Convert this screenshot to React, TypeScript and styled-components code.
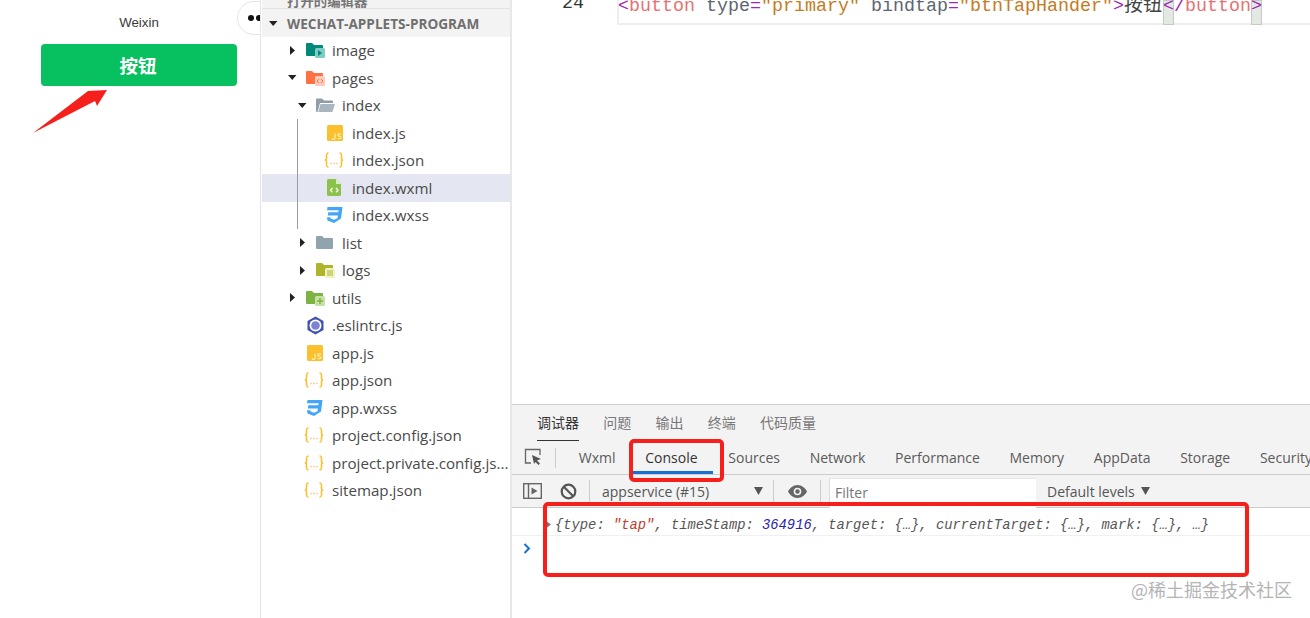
import React from "react";
import styled, { createGlobalStyle } from "styled-components";

const Global = createGlobalStyle`
  html, body { margin: 0; padding: 0; background: #fff; }
  * { box-sizing: border-box; }
`;

const UI = `"Open Sans", "Noto Sans", "Noto Sans CJK SC", sans-serif`;

const Page = styled.div`
  position: relative;
  width: 1310px;
  height: 618px;
  overflow: hidden;
  display: grid;
  grid-template-columns: 261px 251px 798px;
  font-family: ${UI};
`;

/* Simulator */
const Simulator = styled.section`
  position: relative;
  overflow: hidden;
  height: 618px;
  border-right: 1px solid #e3e3e3;
  display: flex;
  flex-direction: column;
  align-items: flex-start;
  padding: 15px 0 0 41px;
`;
const Title = styled.div`
  width: 196px;
  height: 29px;
  text-align: center;
  font: 13.3px/16px "Liberation Sans", sans-serif;
  color: #3a3a3a;
`;
const PrimaryButton = styled.button`
  width: 196px;
  height: 42px;
  border: 0;
  border-radius: 4px;
  background: #07c160;
  color: #fff;
  font: 700 18.5px/42px "Noto Sans CJK SC", sans-serif;
  padding: 0 2px 0 0;
`;
const Capsule = styled.div`
  position: absolute;
  left: 237px;
  top: 1px;
  width: 60px;
  height: 34px;
  border: 1px solid #e5e5e5;
  border-radius: 17px;
  background: #fff;
  display: flex;
  align-items: center;
  gap: 2px;
  padding-left: 10px;
`;
const Dot = styled.i`
  width: 6px;
  height: 6px;
  border-radius: 50%;
  background: #111;
`;

/* Tree */
const Tree = styled.aside`
  height: 618px;
  overflow: hidden;
  border-right: 2px solid #e8e8e8;
  padding-left: 1px;
`;
const Clipped = styled.div`
  height: 9px;
  background: #f3f3f3;
  border-bottom: 1px solid #e2e2e2;
  color: #777;
  font: 700 13.4px/0px "Noto Sans CJK SC", sans-serif;
  padding-left: 25px;
  overflow: hidden;
`;
const Header = styled.div`
  height: 27.5px;
  padding-top: 1px;
  background: #f3f3f3;
  display: flex;
  align-items: center;
  padding-left: 7px;
  gap: 9px;
  font-weight: 700;
  font-size: 13.6px;
  color: #6f6f6f;
  white-space: nowrap;
`;
const GroupWrap = styled.div`
  position: relative;
`;
const Guide = styled.div`
  position: absolute;
  left: 35px;
  top: 0;
  width: 1px;
  height: 110px;
  background: #9c9c9c;
`;
const Row = styled.div<{ $level: number; $selected?: boolean }>`
  height: 27.5px;
  display: flex;
  align-items: center;
  padding-left: ${(p) => 27 + p.$level * 10}px;
  background: ${(p) => (p.$selected ? "#e4e6f1" : "transparent")};
  font-size: 15.15px;
  color: #4a4a4a;
  white-space: nowrap;
`;
const ArrowSlot = styled.span`
  width: 18px;
  flex: none;
  display: flex;
  align-items: center;
  margin-left: -1px;
`;
const IconSlot = styled.span`
  width: 26px;
  flex: none;
  display: flex;
  align-items: center;
`;
const Name = styled.span`
  display: block;
  overflow: hidden;
`;

const Caret = ({ open }: { open?: boolean }) => (
  <svg width="9" height="9" viewBox="0 0 9 9">
    <path d={open ? "M0 2h8.5L4.2 7z" : "M2 0v9l5-4.5z"} fill="#222" />
  </svg>
);

const Folder = ({ color, light, kind }: { color: string; light?: string; kind?: string }) => (
  <svg width="19" height="16" viewBox="0 0 19 16">
    <path d="M0 2a1 1 0 0 1 1-1h5l2 2h8a1 1 0 0 1 1 1v9a1 1 0 0 1-1 1H1a1 1 0 0 1-1-1z" fill={color} />
    {kind && <rect x="9" y="6" width="10" height="10" rx="1.5" fill={light} />}
    {kind === "img" && <path d="M12 8l4 3-4 3z" fill={color} />}
    {kind === "code" && <path d="M13 9l-2 2 2 2M15 9l2 2-2 2" stroke={color} strokeWidth="1" fill="none" />}
    {kind === "log" && <path d="M11 9h6M11 11h6M11 13h6" stroke={color} strokeWidth="1" />}
    {kind === "plus" && <path d="M14 8v6M11 11h6" stroke={color} strokeWidth="1.4" />}
  </svg>
);
const OpenFolder = () => (
  <svg width="19" height="15" viewBox="0 0 19 15">
    <path d="M0 1.5a1 1 0 0 1 1-1h5l2 2h8a1 1 0 0 1 1 1V5H4L1.5 14H1a1 1 0 0 1-1-1z" fill="#8f9ea8" />
    <path d="M4.5 6H19l-2.6 8H2.2z" fill="#aab6be" />
  </svg>
);
const JsIcon = () => (
  <svg width="16" height="16" viewBox="0 0 16 16" style={{ marginLeft: 1 }}>
    <rect width="16" height="16" rx="1.5" fill="#fbc02d" />
    <path d="M8 8.500v4.500a1.500 1.500 0 0 1-3 0M14 9.300c-.6-.8-3.200-.9-3.200.6 0 1.500 3.300 1 3.300 2.700 0 1.500-2.800 1.400-3.500.4" fill="none" stroke="#fff3c4" strokeWidth="1.100" />
  </svg>
);
const JsonIcon = () => (
  <svg width="20" height="16" viewBox="0 0 20 16" style={{ marginLeft: -2 }}>
    <path d="M4.500 1C2.500 1 2.500 2 2.500 4v2.500C2.500 7.500 1.500 8 .8 8c.7 0 1.700.5 1.700 1.500V12c0 2 0 3 2 3M15.500 1c2 0 2 1 2 3v2.500c0 1 1 1.500 1.700 1.500-.7 0-1.700.5-1.700 1.500V12c0 2 0 3-2 3" fill="none" stroke="#fbc02d" strokeWidth="1.600" />
    <path d="M6.500 11.500h1M9.500 11.500h1M12.500 11.500h1" stroke="#f5a742" strokeWidth="1.400" />
  </svg>
);
const WxmlIcon = () => (
  <svg width="15" height="17" viewBox="0 0 15 17" style={{ marginLeft: 1 }}>
    <path d="M1.500 0H9l5 5v10.500a1.500 1.500 0 0 1-1.500 1.500h-11A1.500 1.500 0 0 1 0 15.500v-14A1.500 1.500 0 0 1 1.500 0z" fill="#8bc34a" />
    <path d="M9 0l5 5H9z" fill="#dcedc8" />
    <path d="M5.500 9l-2 2.200 2 2.200M9 9l2 2.200-2 2.200" fill="none" stroke="#fff" strokeWidth="1.200" />
  </svg>
);
const CssIcon = () => (
  <svg width="17" height="16" viewBox="0 0 17 16">
    <path d="M1.500 0H16.500L15 11.500 8 16 1.500 13.500 1 10.200h3.300l.3 1.300L8 12.800l3.500-1.500.4-2.800H1.800L2.300 5.300h10l.3-2H1z" fill="#42a5f5" />
  </svg>
);
const EslintIcon = () => (
  <svg width="19" height="19" viewBox="0 0 19 19">
    <path d="M9.500 .5l8 4.500v9l-8 4.500-8-4.500V5z" fill="#3f51b5" />
    <circle cx="9.500" cy="9.500" r="6" fill="#fff" />
    <circle cx="9.500" cy="9.500" r="4.300" fill="#7c83d4" />
  </svg>
);

type Node = { name: string; level: number; caret?: "open" | "closed"; icon: React.ReactNode; selected?: boolean };

const topNodes: Node[] = [
  { name: "image", level: 0, caret: "closed", icon: <Folder color="#00897b" light="#80cbc4" kind="img" /> },
  { name: "pages", level: 0, caret: "open", icon: <Folder color="#ff7043" light="#ffccbc" kind="code" /> },
  { name: "index", level: 1, caret: "open", icon: <OpenFolder /> },
];
const indexNodes: Node[] = [
  { name: "index.js", level: 2, icon: <JsIcon /> },
  { name: "index.json", level: 2, icon: <JsonIcon /> },
  { name: "index.wxml", level: 2, icon: <WxmlIcon />, selected: true },
  { name: "index.wxss", level: 2, icon: <CssIcon /> },
];
const restNodes: Node[] = [
  { name: "list", level: 1, caret: "closed", icon: <Folder color="#90a4ae" /> },
  { name: "logs", level: 1, caret: "closed", icon: <Folder color="#afb42b" light="#f0f4c3" kind="log" /> },
  { name: "utils", level: 0, caret: "closed", icon: <Folder color="#7cb342" light="#c5e1a5" kind="plus" /> },
  { name: ".eslintrc.js", level: 0, icon: <EslintIcon /> },
  { name: "app.js", level: 0, icon: <JsIcon /> },
  { name: "app.json", level: 0, icon: <JsonIcon /> },
  { name: "app.wxss", level: 0, icon: <CssIcon /> },
  { name: "project.config.json", level: 0, icon: <JsonIcon /> },
  { name: "project.private.config.js...", level: 0, icon: <JsonIcon /> },
  { name: "sitemap.json", level: 0, icon: <JsonIcon /> },
];

const TreeRow = ({ n }: { n: Node }) => (
  <Row $level={n.level} $selected={n.selected}>
    <ArrowSlot>{n.caret && <Caret open={n.caret === "open"} />}</ArrowSlot>
    <IconSlot>{n.icon}</IconSlot>
    <Name>{n.name}</Name>
  </Row>
);

/* Right side */
const Main = styled.main`
  height: 618px;
  display: grid;
  grid-template-rows: 404px 214px;
`;
const Editor = styled.div`
  overflow: hidden;
  display: flex;
  align-items: flex-start;
  padding-left: 50px;
`;
const LineNo = styled.div`
  width: 55px;
  font: 18.3px/6px "Liberation Mono", monospace;
  color: #333;
`;
const CodeLine = styled.div`
  position: relative;
  isolation: isolate;
  flex: 1;
  height: 25px;
  border: 2px solid #eeeeee;
  border-top: 0;
  border-right: 0;
  font: 18.33px/6px "Liberation Mono", "Noto Sans CJK SC", monospace;
  white-space: nowrap;
  color: #5c6670;
  text-indent: -1px;
`;
const Tok = styled.span<{ $c: string }>`
  color: ${(p) => p.$c};
`;
const MatchTok = styled.span`
  color: #9c27b0;
  &::before {
    content: "";
    position: absolute;
    top: 0;
    width: 11px;
    height: 25px;
    z-index: -1;
    background: #e3e8e3;
    box-shadow: inset 0 0 0 1px #c3cbc3;
  }
`;
const Cjk = styled.span`
  display: inline-block;
  width: 39px;
  font-size: 19px;
  text-indent: 0;
  font-family: "Noto Sans CJK SC", sans-serif;
  color: #444;
`;

const Dev = styled.div`
  background: #fff;
  border-top: 1px solid #cfcfcf;
  display: flex;
  flex-direction: column;
  overflow: hidden;
`;
const TopTabs = styled.div`
  height: 36px;
  flex: none;
  background: #f3f3f3;
  display: flex;
  align-items: flex-start;
  padding-left: 25px;
  gap: 24.25px;
`;
const TopTab = styled.div<{ $active?: boolean }>`
  height: 36px;
  font: 14px/35px "Noto Sans CJK SC", sans-serif;
  color: ${(p) => (p.$active ? "#333" : "#777")};
  border-bottom: 1px solid ${(p) => (p.$active ? "#333" : "transparent")};
`;
const PanelTabs = styled.div`
  height: 34px;
  flex: none;
  background: #f3f3f3;
  border-bottom: 1px solid #ccc;
  display: flex;
  align-items: stretch;
  white-space: nowrap;
  overflow: hidden;
`;
const InspectBox = styled.div`
  width: 43px;
  flex: none;
  display: flex;
  align-items: center;
  padding: 0 0 2px 12px;
`;
const VSep = styled.i<{ $h: number }>`
  width: 1px;
  height: ${(p) => p.$h}px;
  background: #ccc;
  flex: none;
  align-self: center;
`;
const PanelTab = styled.div<{ $active?: boolean; $first?: boolean }>`
  padding: 0 14.85px;
  flex: none;
  margin-left: ${(p) => (p.$first ? 8 : 0)}px;
  font-size: 14px;
  line-height: 33px;
  color: ${(p) => (p.$active ? "#333" : "#5a5a5a")};
  ${(p) => p.$active && "box-shadow: inset 0 -3px 0 #1a6fd4; width: 83px;"}
`;
const Toolbar = styled.div`
  height: 33px;
  flex: none;
  background: #f3f3f3;
  border-bottom: 1px solid #ccc;
  display: flex;
  align-items: center;
  padding-left: 11px;
  color: #555;
  font-size: 14px;
  white-space: nowrap;
`;
const ToolIcon = styled.span<{ $w: number; $pad?: number }>`
  width: ${(p) => p.$w}px;
  padding-left: ${(p) => p.$pad ?? 0}px;
  flex: none;
  display: flex;
  align-items: center;
`;
const Context = styled.div`
  width: 183px;
  flex: none;
  padding: 0 10px 0 12px;
  display: flex;
  align-items: center;
  justify-content: space-between;
`;
const FilterBox = styled.div`
  width: 207px;
  height: 30px;
  margin: 3px 11px 0 8px;
  background: #fff;
  border-left: 1px solid #ddd;
  border-top: 1px solid #e5e5e5;
  color: #777;
  padding: 4px 0 0 5px;
  flex: none;
`;
const Levels = styled.div`
  display: flex;
  align-items: center;
  gap: 6px;
`;
const ConsoleLine = styled.div`
  height: 28px;
  flex: none;
  border-bottom: 1px solid #f0f0f0;
  display: flex;
  align-items: center;
  padding: 7px 0 0 33px;
  font: italic 13.8px/21px "Liberation Mono", monospace;
  color: #555;
  white-space: nowrap;
`;
const Expand = styled.span`
  width: 10px;
  flex: none;
  display: flex;
  margin-top: -2px;
`;
const Prompt = styled.div`
  height: 26px;
  padding: 1px 0 0 11px;
`;
const Tri = () => (
  <svg width="9" height="8" viewBox="0 0 9 8"><path d="M0 0h9L4.500 8z" fill="#555" /></svg>
);

/* Annotations over the picture */
const Mark = styled.div<{ $x: number; $y: number; $w: number; $h: number }>`
  position: absolute;
  left: ${(p) => p.$x}px;
  top: ${(p) => p.$y}px;
  width: ${(p) => p.$w}px;
  height: ${(p) => p.$h}px;
  border: 4px solid #f5201c;
  border-radius: 5px;
`;
const ArrowMark = styled.svg`
  position: absolute;
  left: 30px;
  top: 88px;
`;
const Watermark = styled.div`
  position: absolute;
  right: 18px;
  top: 577px;
  font: 18px/24px "Noto Sans CJK SC", sans-serif;
  color: #b4b4b4;
  white-space: nowrap;
`;

export default function App() {
  return (
    <Page>
      <Global />
      <Simulator>
        <Title>Weixin</Title>
        <PrimaryButton>按钮</PrimaryButton>
        <Capsule><Dot /><Dot /></Capsule>
      </Simulator>

      <Tree>
        <Clipped>打开的编辑器</Clipped>
        <Header><Caret open />WECHAT-APPLETS-PROGRAM</Header>
        {topNodes.map((n) => <TreeRow key={n.name} n={n} />)}
        <GroupWrap>
          <Guide />
          {indexNodes.map((n) => <TreeRow key={n.name} n={n} />)}
        </GroupWrap>
        {restNodes.map((n) => <TreeRow key={n.name} n={n} />)}
      </Tree>

      <Main>
        <Editor>
          <LineNo>24</LineNo>
          <CodeLine>
            <Tok $c="#9c27b0">&lt;</Tok>
            <Tok $c="#e57373">button</Tok>{" "}
            <Tok $c="#5c6670">type</Tok>
            <Tok $c="#9c27b0">=</Tok>
            <Tok $c="#c77a1f">"primary"</Tok>{" "}
            <Tok $c="#5c6670">bindtap</Tok>
            <Tok $c="#9c27b0">=</Tok>
            <Tok $c="#c77a1f">"btnTapHander"</Tok>
            <Tok $c="#9c27b0">&gt;</Tok>
            <Cjk>按钮</Cjk>
            <MatchTok>&lt;</MatchTok>
            <Tok $c="#9c27b0">/</Tok>
            <Tok $c="#e57373">button</Tok>
            <MatchTok>&gt;</MatchTok>
          </CodeLine>
        </Editor>

        <Dev>
          <TopTabs>
            <TopTab $active>调试器</TopTab>
            <TopTab>问题</TopTab>
            <TopTab>输出</TopTab>
            <TopTab>终端</TopTab>
            <TopTab>代码质量</TopTab>
          </TopTabs>
          <PanelTabs>
            <InspectBox>
              <svg width="19" height="18" viewBox="0 0 19 18">
                <path d="M7 15H1.500V1.500H16V7" fill="none" stroke="#666" strokeWidth="1.300" />
                <path d="M8 7l9 4-4 1.500 3 3-1.500 1.500-3-3L10 16z" fill="#555" />
              </svg>
            </InspectBox>
            <VSep $h={20} />
            <PanelTab $first>Wxml</PanelTab>
            <PanelTab $active>Console</PanelTab>
            <PanelTab>Sources</PanelTab>
            <PanelTab>Network</PanelTab>
            <PanelTab>Performance</PanelTab>
            <PanelTab>Memory</PanelTab>
            <PanelTab>AppData</PanelTab>
            <PanelTab>Storage</PanelTab>
            <PanelTab>Security</PanelTab>
          </PanelTabs>
          <Toolbar>
            <ToolIcon $w={37}>
              <svg width="19" height="16" viewBox="0 0 19 16">
                <rect x=".7" y=".7" width="17.600" height="14.600" fill="none" stroke="#666" strokeWidth="1.400" />
                <path d="M5.500 1v14" stroke="#666" strokeWidth="1.400" />
                <path d="M8.500 4.500l6 3.500-6 3.500z" fill="#666" />
              </svg>
            </ToolIcon>
            <ToolIcon $w={29}>
              <svg width="17" height="17" viewBox="0 0 17 17">
                <circle cx="8.500" cy="8.500" r="6.800" fill="none" stroke="#555" strokeWidth="2.200" />
                <path d="M3.800 3.800l9.400 9.400" stroke="#555" strokeWidth="2.200" />
              </svg>
            </ToolIcon>
            <VSep $h={22} />
            <Context>
              <span>appservice (#15)</span>
              <Tri />
            </Context>
            <VSep $h={22} />
            <ToolIcon $w={46} $pad={14}>
              <svg width="19" height="13" viewBox="0 0 19 13">
                <path d="M9.500 0C5 0 1.800 3 0 6.500 1.800 10 5 13 9.500 13S17.200 10 19 6.500C17.200 3 14 0 9.500 0z" fill="#666" />
                <circle cx="9.500" cy="6.500" r="3.800" fill="#f3f3f3" />
                <circle cx="9.500" cy="6.500" r="2.200" fill="#666" />
              </svg>
            </ToolIcon>
            <VSep $h={22} />
            <FilterBox>Filter</FilterBox>
            <Levels>Default levels <Tri /></Levels>
          </Toolbar>
          <ConsoleLine>
            <Expand>
              <svg width="6" height="9" viewBox="0 0 6 9"><path d="M0 0l6 4.500L0 9z" fill="#777" /></svg>
            </Expand>
            <span>
              {"{type: "}<Tok $c="#c0392b">"tap"</Tok>{", timeStamp: "}<Tok $c="#2c1fb0">364916</Tok>
              {", target: {…}, currentTarget: {…}, mark: {…}, …}"}
            </span>
          </ConsoleLine>
          <Prompt>
            <svg width="8" height="11" viewBox="0 0 8 11"><path d="M1.500 1l4.500 4.500L1.500 10" fill="none" stroke="#1a6fd4" strokeWidth="2" /></svg>
          </Prompt>
        </Dev>
      </Main>

      <ArrowMark width="80" height="48" viewBox="0 0 80 48">
        <path d="M3 45L58 3 77 2 67 18 65 13z" fill="#f5201c" />
      </ArrowMark>
      <Mark $x={629} $y={439} $w={95} $h={43} />
      <Mark $x={543} $y={502} $w={706} $h={75} />
      <Watermark>@稀土掘金技术社区</Watermark>
    </Page>
  );
}
